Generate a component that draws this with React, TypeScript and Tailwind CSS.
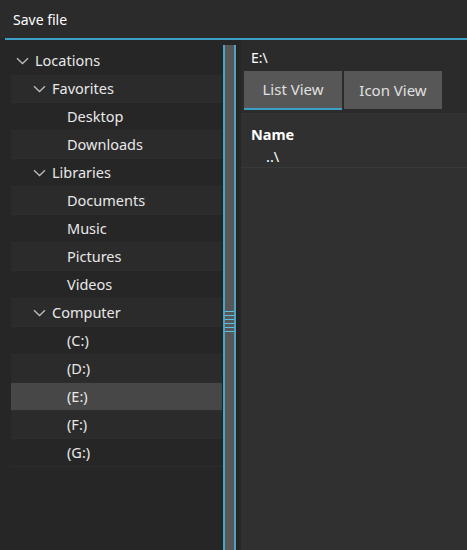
import React from "react";

type Node = { label: string; children?: Node[] };

const tree: Node[] = [
  { label: "Favorites", children: [{ label: "Desktop" }, { label: "Downloads" }] },
  {
    label: "Libraries",
    children: [{ label: "Documents" }, { label: "Music" }, { label: "Pictures" }, { label: "Videos" }],
  },
  {
    label: "Computer",
    children: [{ label: "(C:)" }, { label: "(D:)" }, { label: "(E:)" }, { label: "(F:)" }, { label: "(G:)" }],
  },
];

function Chevron() {
  return (
    <svg width="13" height="8" viewBox="0 0 13 8" className="shrink-0">
      <path d="M1 1.2 L6.5 6.5 L12 1.2" fill="none" stroke="#bdbdbd" strokeWidth="1.3" />
    </svg>
  );
}

function Row({
  label,
  indent,
  alt,
  selected,
  chevron,
}: {
  label: string;
  indent: number;
  alt: boolean;
  selected?: boolean;
  chevron?: boolean;
}) {
  const bg = selected ? "bg-[#474747]" : alt ? "bg-[#2b2b2b]" : "bg-[#262626]";
  return (
    <div className={`h-[28px] flex items-center border-b border-[#2d2d2d] ${bg}`} style={{ paddingLeft: indent }}>
      {chevron && <Chevron />}
      <span className={chevron ? "ml-[6px]" : ""}>{label}</span>
    </div>
  );
}

export default function App() {
  let i = 0;
  const rows: React.ReactNode[] = [];
  tree.forEach((group) => {
    rows.push(<Row key={group.label} label={group.label} indent={22} alt={i++ % 2 === 0} chevron />);
    group.children?.forEach((c) => {
      rows.push(<Row key={c.label} label={c.label} indent={56} alt={i++ % 2 === 0} selected={c.label === "(E:)"} />);
    });
  });

  return (
    <div
      className="w-[467px] h-[550px] bg-[#262626] text-[#e8e8e8] text-[14.5px] flex flex-col overflow-hidden"
      style={{ fontFamily: '"Noto Sans", "Open Sans", sans-serif' }}
    >
      <div className="h-[38px] shrink-0 flex items-center pl-[13px] bg-[#2b2b2b] text-white text-[14px]">Save file</div>
      <div className="ml-[5px] h-[2px] shrink-0 bg-[#3d9fc6]" />
      <div className="flex flex-1 min-h-0">
        {/* tree */}
        <div className="w-[222px] shrink-0 pt-[7px]">
          <div className="h-[28px] flex items-center pl-[16px]">
            <Chevron />
            <span className="ml-[6px]">Locations</span>
          </div>
          <div className="ml-[11px]">{rows}</div>
        </div>

        {/* splitter */}
        <div className="w-[15px] shrink-0 mt-[5px] px-px bg-[#222]">
          <div className="h-full border-x-2 border-[#4ba3c6] bg-[#575757] flex flex-col items-stretch justify-center">
            <div className="flex flex-col gap-[3px] mt-[47px]">
              <div className="h-px bg-[#5cc0e6]" />
              <div className="h-px bg-[#5cc0e6]" />
              <div className="h-px bg-[#5cc0e6]" />
              <div className="h-px bg-[#5cc0e6]" />
              <div className="h-px bg-[#5cc0e6]" />
              <div className="h-px bg-[#5cc0e6]" />
            </div>
          </div>
        </div>

        {/* right */}
        <div className="ml-[4px] flex-1 flex flex-col min-w-0">
          <div className="bg-[#2b2b2b] pt-[7px] border-b border-[#333]">
            <div className="h-[21px] flex items-center pl-[10px] text-white text-[14px]">E:\</div>
            <div className="flex gap-[2px] pl-[3px] pt-[3px] pb-[3px] text-[15px]">
              <div className="w-[98px] h-[39px] bg-[#575757] border-b-2 border-[#3d9fc6] flex items-center justify-center text-[#e0e0e0]">
                List View
              </div>
              <div className="w-[98px] h-[38px] bg-[#575757] flex items-center justify-center text-[#e0e0e0]">
                Icon View
              </div>
            </div>
          </div>
          <div className="flex-1 bg-[#303030] pt-[10px]">
            <div className="h-[22px] flex items-center pl-[10px] font-bold text-white">Name</div>
            <div className="h-[22px] flex items-center pl-[25px] border-b border-[#383838] text-white">..\</div>
          </div>
        </div>
      </div>
    </div>
  );
}
